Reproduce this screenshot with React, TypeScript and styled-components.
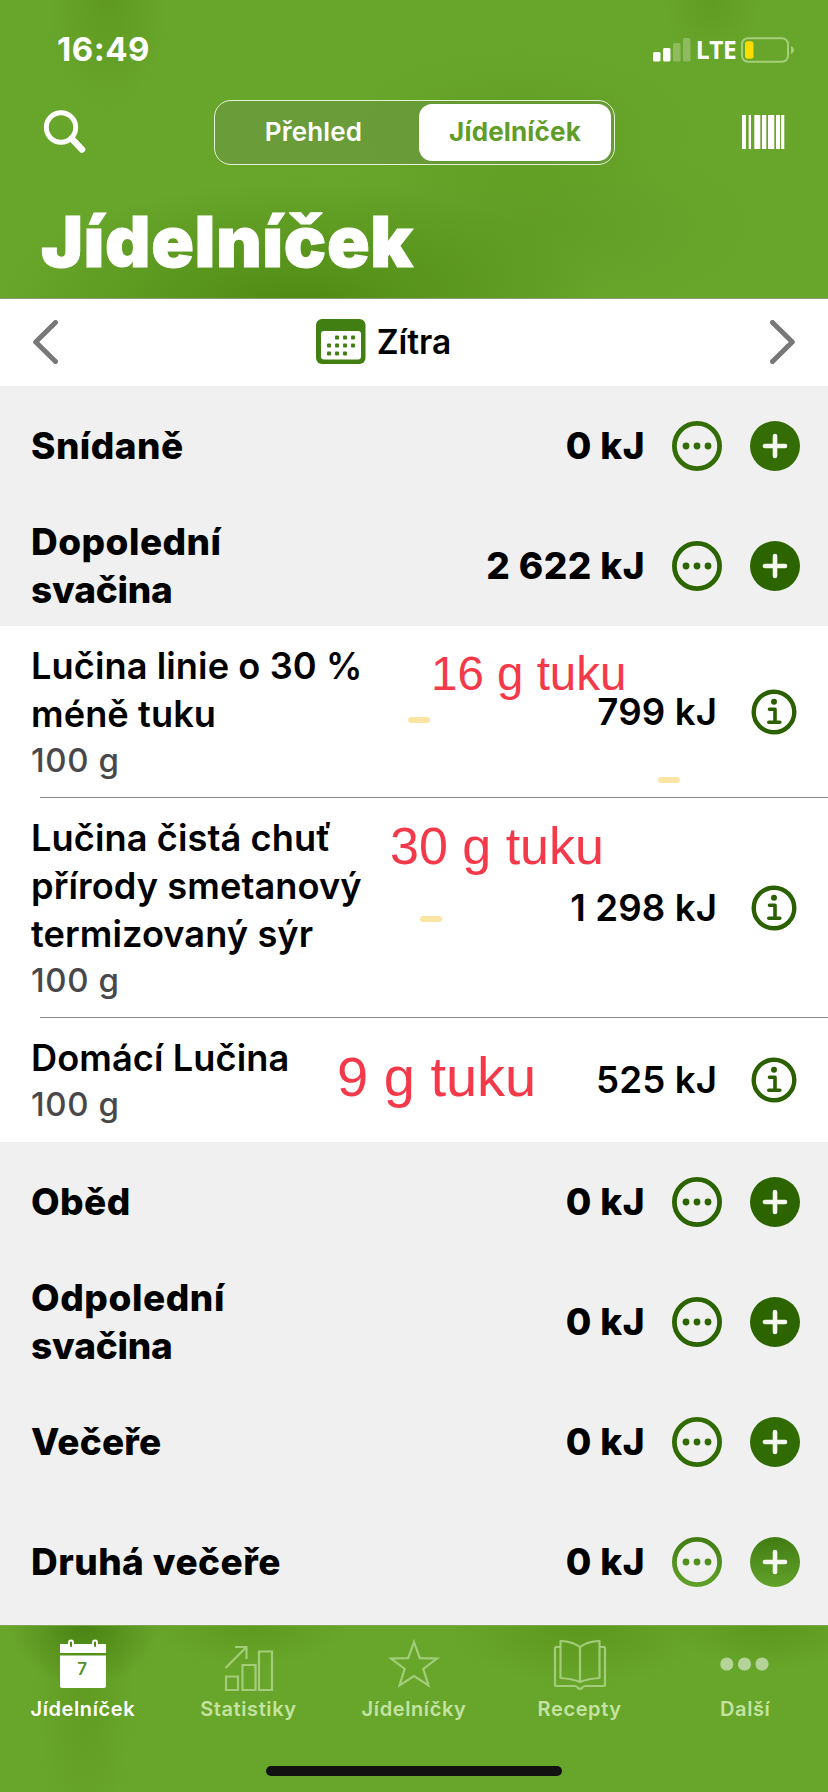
import React from "react";
import styled, { createGlobalStyle } from "styled-components";

const GlobalStyle = createGlobalStyle`
  * { box-sizing: border-box; }
  body { margin: 0; background: #f0f0f0; }
`;

const Screen = styled.div`
  position: relative;
  width: 828px;
  height: 1792px;
  overflow: hidden;
  display: flex;
  flex-direction: column;
  background: #f0f0f0;
  color: #000;
  font-family: Inter, "Liberation Sans", sans-serif;
`;

const Header = styled.header`
  height: 299px;
  flex: none;
  display: flex;
  flex-direction: column;
  color: #fff;
  border-bottom: 1px solid #8a9a7c;
  background:
    radial-gradient(ellipse 60px 110px at 108px 0, rgba(86, 142, 22, 0.5), transparent),
    radial-gradient(ellipse 50px 50px at 712px 5px, rgba(86, 142, 22, 0.4), transparent),
    radial-gradient(ellipse 170px 80px at 520px 130px, rgba(86, 148, 22, 0.4), transparent),
    radial-gradient(ellipse 300px 130px at 300px 310px, rgba(70, 130, 10, 0.75), transparent),
    radial-gradient(ellipse 220px 90px at 530px 225px, rgba(86, 146, 30, 0.4), transparent),
    #68a52b;
`;

const StatusBar = styled.div`
  height: 99px;
  display: flex;
  justify-content: space-between;
  padding: 0 33px 0 57px;
`;

const Clock = styled.span`
  font-size: 33px;
  font-weight: 750;
  line-height: 99px;
  letter-spacing: 0.5px;
`;

const StatusIcons = styled.div`
  display: flex;
  align-items: center;
  height: 99px;
`;

const Network = styled.span`
  width: 50px;
  text-align: center;
  font-family: "Open Sans", "Noto Sans", sans-serif;
  font-size: 24.5px;
  font-weight: 700;
  line-height: 30px;
  letter-spacing: -0.5px;
`;

const Toolbar = styled.div`
  height: 66px;
  display: flex;
  align-items: center;
  justify-content: space-between;
  padding: 0 43px;
`;

const Segmented = styled.div`
  width: 401px;
  height: 65px;
  display: flex;
  border: 1.5px solid #e4f2d4;
  border-radius: 17px;
  padding: 3px;
  background: rgba(110, 145, 80, 0.4);
`;

const Segment = styled.button<{ $active?: boolean }>`
  flex: ${(p) => (p.$active ? "0 0 192px" : "1")};
  border: 0;
  border-radius: 13px;
  padding: ${(p) => (p.$active ? "0 0 2px" : "0 10px 2px 0")};
  font-family: Inter, sans-serif;
  font-size: 26px;
  font-weight: ${(p) => (p.$active ? 700 : 600)};
  letter-spacing: 0.15px;
  color: ${(p) => (p.$active ? "#609c28" : "#fff")};
  background: ${(p) => (p.$active ? "#fff" : "transparent")};
`;

const Title = styled.h1`
  margin: 0;
  padding-left: 41px;
  font-size: 70.5px;
  font-weight: 900;
  line-height: 153px;
  height: 133px;
  letter-spacing: 0.6px;
  -webkit-text-stroke: 1px #fff;
`;

const DateBar = styled.nav`
  height: 87px;
  flex: none;
  display: flex;
  align-items: center;
  justify-content: space-between;
  padding: 0 33px 2px;
  background: #fff;
`;

const DateLabel = styled.div`
  display: flex;
  align-items: center;
  gap: 11px;
  margin-right: 61px;
  font-size: 33.5px;
  font-weight: 600;
`;

const SectionRow = styled.section`
  height: 120px;
  flex: none;
  display: flex;
  align-items: center;
  padding: 0 28px 0 31px;
  font-size: 37px;
  font-weight: 800;
`;

const SectionName = styled.h2`
  margin: 0;
  flex: none;
  width: 260px;
  font: inherit;
  line-height: 48px;
`;

const NameLine = styled.span<{ $spacing: number }>`
  display: block;
  letter-spacing: ${(p) => p.$spacing}px;
`;

const SectionEnergy = styled.span`
  flex: 1;
  text-align: right;
  margin-right: 27px;
  padding-bottom: 2px;
  letter-spacing: 0.45px;
`;

const RoundIcon = styled.svg`
  width: 50px;
  height: 50px;
  flex: none;
  & + & { margin-left: 28px; }
`;

const FoodRow = styled.article<{ $lines: number }>`
  position: relative;
  height: ${(p) => 76 + p.$lines * 48}px;
  flex: none;
  display: flex;
  align-items: center;
  justify-content: space-between;
  padding: 0 31px;
  background: #fff;
  &:not(:last-of-type)::after {
    content: "";
    position: absolute;
    left: 40px;
    right: 0;
    bottom: 0;
    height: 1px;
    background: #868686;
  }
`;

const FoodList = styled.div`
  position: relative;
  display: flex;
  flex-direction: column;
  flex: none;
`;

const FoodName = styled.div`
  font-size: 36.2px;
  font-weight: 600;
  line-height: 48px;
  letter-spacing: 0.08px;
  white-space: pre;
`;

const FoodAmount = styled.div`
  font-size: 33px;
  font-weight: 550;
  line-height: 44px;
  letter-spacing: 0.6px;
  color: #48484a;
`;

const FoodSide = styled.div`
  display: flex;
  align-items: center;
  gap: 34px;
  font-size: 36.7px;
  font-weight: 600;
  letter-spacing: 0.1px;
`;

const FoodEnergy = styled.span`
  padding-bottom: 2px;
`;

const Note = styled.span<{ $x: number; $y: number; $size: number }>`
  position: absolute;
  left: ${(p) => p.$x}px;
  top: ${(p) => p.$y}px;
  font: ${(p) => p.$size}px / 1 "Liberation Sans", Arial, sans-serif;
  color: #f43a4a;
  white-space: pre;
`;

const Mark = styled.i<{ $x: number; $y: number }>`
  position: absolute;
  left: ${(p) => p.$x}px;
  top: ${(p) => p.$y}px;
  width: 22px;
  height: 6px;
  border-radius: 3px;
  background: #fae5a4;
`;

const TabBar = styled.footer`
  position: absolute;
  left: 0;
  right: 0;
  bottom: 0;
  height: 167px;
  display: flex;
  flex-direction: column;
  align-items: center;
  border-top: 1px solid #7fa653;
  background:
    radial-gradient(ellipse 75px 60px at 85px 0, rgba(68, 125, 15, 0.8), transparent),
    radial-gradient(ellipse 50px 170px at 85px 50px, rgba(86, 146, 22, 0.5), transparent),
    radial-gradient(ellipse 100px 40px at 250px 0, rgba(86, 146, 22, 0.6), transparent),
    radial-gradient(ellipse 130px 60px at 580px 0, rgba(86, 146, 22, 0.7), transparent),
    radial-gradient(ellipse 100px 45px at 770px 0, rgba(86, 146, 22, 0.7), transparent),
    #68a52b;
`;

const Tabs = styled.div`
  width: 828px;
  height: 140px;
  display: grid;
  grid-template-columns: repeat(5, 1fr);
`;

const Tab = styled.div<{ $active?: boolean }>`
  display: flex;
  flex-direction: column;
  align-items: center;
  padding-top: 10px;
  font-size: 20px;
  font-weight: 600;
  line-height: 24px;
  letter-spacing: 0.6px;
  color: ${(p) => (p.$active ? "#fff" : "#c4e3a0")};
`;

const TabIcon = styled.svg`
  width: 56px;
  height: 56px;
  margin-bottom: 5px;
`;

const HomeIndicator = styled.div`
  width: 296px;
  height: 10px;
  border-radius: 5px;
  background: #111;
`;

const Signal = () => (
  <svg width="38" height="24" fill="#fff">
    <rect x="0" y="14" width="7.5" height="9.5" rx="1.5" />
    <rect x="10" y="10" width="7.5" height="13.5" rx="1.5" />
    <rect x="20" y="5" width="7.5" height="18.5" rx="1.5" opacity=".25" />
    <rect x="30" y="0" width="7.5" height="23.5" rx="1.5" opacity=".25" />
  </svg>
);

const Battery = () => (
  <svg width="54" height="26">
    <rect x="1" y="1.2" width="46" height="23.6" rx="6" fill="none" stroke="#a5d078" strokeWidth="2" />
    <rect x="4" y="4.3" width="8.5" height="17.4" rx="2.5" fill="#fbdc00" />
    <path d="M50 9c4 1.500 4 6.500 0 8z" fill="#a5d078" />
  </svg>
);

const SearchIcon = () => (
  <svg width="44" height="44" fill="none" stroke="#fff" strokeLinecap="round">
    <circle cx="18" cy="17.500" r="14.700" strokeWidth="5" />
    <path d="M28.500 28.500L39 39.500" strokeWidth="6.500" />
  </svg>
);

const BarcodeIcon = () => (
  <svg width="43" height="34" fill="#fff">
    {[[0, 4], [6.7, 2.3], [12.3, 6], [20, 4.3], [26, 6.3], [34, 4], [39, 3.3]].map(([x, w]) => (
      <rect key={x} x={x} y="0" width={w} height="34" />
    ))}
  </svg>
);

const Chevron = ({ flip }: { flip?: boolean }) => (
  <svg width="25" height="44" fill="none" stroke="#78787a" strokeWidth="5" strokeLinecap="round" strokeLinejoin="round">
    <path d={flip ? "M2.500 2.500L22.300 22L2.500 41.500" : "M22.500 2.500L2.700 22L22.500 41.500"} />
  </svg>
);

const calendarDots = [[1, 0], [2, 0], [3, 0], [0, 1], [1, 1], [2, 1], [3, 1], [0, 2], [1, 2], [2, 2]];

const CalendarIcon = () => (
  <svg width="50" height="45">
    <rect width="49.500" height="45" rx="6" fill="#427f12" />
    <rect x="5" y="12" width="40" height="28.500" rx="3" fill="#fff" />
    {calendarDots.map(([c, r]) => (
      <rect key={`${c}${r}`} x={11 + c * 8} y={16.5 + r * 8} width="4" height="4" rx="1" fill="#427f12" />
    ))}
  </svg>
);

const MoreIcon = ({ paint }: { paint: string }) => (
  <RoundIcon viewBox="0 0 50 50" fill={paint}>
    <circle cx="25" cy="25" r="22.600" fill="none" stroke={paint} strokeWidth="4.800" />
    <circle cx="14" cy="25" r="3.400" />
    <circle cx="25" cy="25" r="3.400" />
    <circle cx="36" cy="25" r="3.400" />
  </RoundIcon>
);

const AddIcon = ({ paint }: { paint: string }) => (
  <RoundIcon viewBox="0 0 50 50">
    <circle cx="25" cy="25" r="25" fill={paint} />
    <path d="M25 15v20M15 25h20" stroke="#f4f8ef" strokeWidth="4.600" strokeLinecap="round" />
  </RoundIcon>
);

const InfoIcon = () => (
  <svg width="46" height="46" fill="none" stroke="#2a6000" strokeWidth="4.400">
    <circle cx="23" cy="23" r="20.300" />
    <circle cx="23" cy="12.800" r="3" fill="#2a6000" stroke="none" />
    <path d="M18.500 20.200h5.500v13M17.800 33.200h11" strokeWidth="3.600" strokeLinecap="round" strokeLinejoin="round" />
  </svg>
);

type SectionProps = { name: string; second?: string; energy: string; spacing?: number; paint?: string };

const Section = ({ name, second, energy, spacing = 0.45, paint = "#2c6500" }: SectionProps) => (
  <SectionRow>
    <SectionName>
      <NameLine $spacing={spacing}>{name}</NameLine>
      {second && <NameLine $spacing={-0.2}>{second}</NameLine>}
    </SectionName>
    <SectionEnergy>{energy}</SectionEnergy>
    <MoreIcon paint={paint} />
    <AddIcon paint={paint} />
  </SectionRow>
);

const foods = [
  { name: "Lučina linie o 30 %\nméně tuku", lines: 2, energy: "799 kJ" },
  { name: "Lučina čistá chuť\npřírody smetanový\ntermizovaný sýr", lines: 3, energy: "1 298 kJ" },
  { name: "Domácí Lučina", lines: 1, energy: "525 kJ" },
];

export default function App() {
  return (
    <Screen>
      <GlobalStyle />
      <svg width="0" height="0" style={{ position: "absolute" }}>
        <linearGradient id="fade" x1="0" y1="0" x2="0" y2="50" gradientUnits="userSpaceOnUse">
          <stop offset="0" stopColor="#417c13" />
          <stop offset="1" stopColor="#62a22b" />
        </linearGradient>
      </svg>
      <Header>
        <StatusBar>
          <Clock>16:49</Clock>
          <StatusIcons>
            <Signal />
            <Network>LTE</Network>
            <Battery />
          </StatusIcons>
        </StatusBar>
        <Toolbar>
          <SearchIcon />
          <Segmented>
            <Segment>Přehled</Segment>
            <Segment $active>Jídelníček</Segment>
          </Segmented>
          <BarcodeIcon />
        </Toolbar>
        <Title>Jídelníček</Title>
      </Header>
      <DateBar>
        <Chevron />
        <DateLabel>
          <CalendarIcon />
          Zítra
        </DateLabel>
        <Chevron flip />
      </DateBar>
      <Section name="Snídaně" energy="0 kJ" paint="#346d05" />
      <Section name="Dopolední" second="svačina" energy="2 622 kJ" />
      <FoodList>
        {foods.map((f) => (
          <FoodRow key={f.name} $lines={f.lines}>
            <div>
              <FoodName>{f.name}</FoodName>
              <FoodAmount>100 g</FoodAmount>
            </div>
            <FoodSide>
              <FoodEnergy>{f.energy}</FoodEnergy>
              <InfoIcon />
            </FoodSide>
          </FoodRow>
        ))}
        <Note $x={431} $y={24} $size={47.5}>16 g tuku</Note>
        <Note $x={390} $y={194} $size={52}>30 g tuku</Note>
        <Note $x={337} $y={423} $size={56}>9 g tuku</Note>
        <Mark $x={408} $y={91} />
        <Mark $x={658} $y={151} />
        <Mark $x={420} $y={290} />
      </FoodList>
      <Section name="Oběd" energy="0 kJ" />
      <Section name="Odpolední" second="svačina" energy="0 kJ" spacing={0.55} />
      <Section name="Večeře" energy="0 kJ" spacing={0.2} paint="#306b04" />
      <Section name="Druhá večeře" energy="0 kJ" paint="url(#fade)" />
      <TabBar>
        <Tabs>
          <Tab $active>
            <TabIcon viewBox="0 0 56 56">
              <path d="M5 8h46v9H5zM5 19.500h46V50q0 2-2 2H7q-2 0-2-2z" fill="#fff" />
              <path d="M16 10V6.500M40 10V6.500" stroke="#fff" strokeWidth="6" strokeLinecap="round" />
              <path d="M16 10V6.500M40 10V6.500" stroke="#4c8a1a" strokeWidth="2" strokeLinecap="round" />
              <text x="27.500" y="39" textAnchor="middle" fontFamily="Inter" fontSize="17" fontWeight="600" fill="#578f2b">7</text>
            </TabIcon>
            Jídelníček
          </Tab>
          <Tab>
            <TabIcon viewBox="0 0 56 56" fill="none" stroke="#a2cd79" strokeWidth="2.200">
              <path d="M6 40.500h12V54H6zM22.500 29h13v25h-13zM39 15.500h13V54H39zM5.500 32L26 11.500M15 11h11.500v12" />
            </TabIcon>
            Statistiky
          </Tab>
          <Tab>
            <TabIcon viewBox="0 0 56 56" fill="none" stroke="#a2cd79" strokeWidth="2.200">
              <path d="M28 6l5.800 16.200L51 22.500L37.300 33L42.500 49.500L28 40L13.500 49.500L18.700 33L5 22.500L22.200 22.200z" />
            </TabIcon>
            Jídelníčky
          </Tab>
          <Tab>
            <TabIcon viewBox="0 0 56 56" fill="none" stroke="#a2cd79" strokeWidth="2.200" strokeLinejoin="round">
              <path d="M28 11Q21 5.500 8.500 5V42Q21 43 28 46Q35 43 47.500 42V5Q35 5.500 28 11V46" />
              <path d="M8 11H4Q3 11 3 12V49Q3 50 4 50H23Q25 50 26 52Q28 53.500 30 52Q31 50 33 50H52Q53 50 53 49V12Q53 11 52 11H48" />
            </TabIcon>
            Recepty
          </Tab>
          <Tab>
            <TabIcon viewBox="0 0 56 56" fill="#b4d396">
              <circle cx="9.800" cy="28" r="6.600" />
              <circle cx="27.500" cy="28" r="6.600" />
              <circle cx="45" cy="28" r="6.600" />
            </TabIcon>
            Další
          </Tab>
        </Tabs>
        <HomeIndicator />
      </TabBar>
    </Screen>
  );
}
